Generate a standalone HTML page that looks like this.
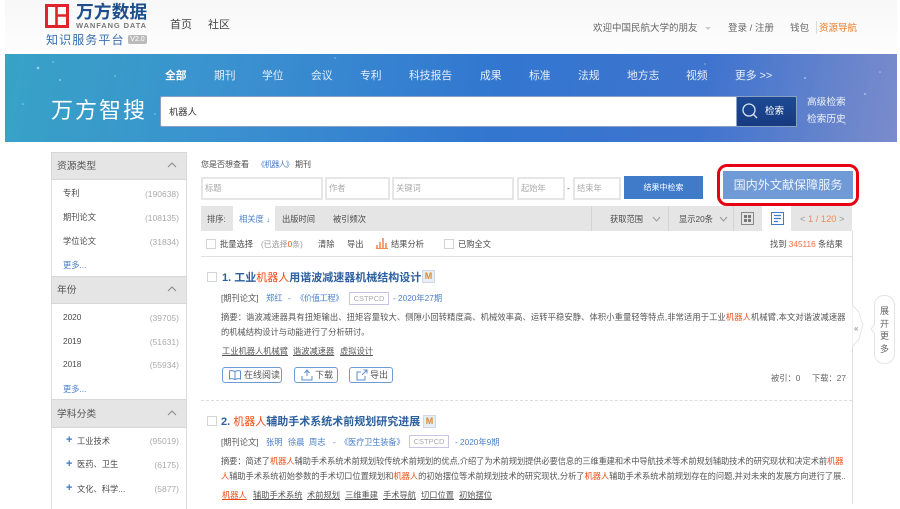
<!DOCTYPE html>
<html lang="zh"><head><meta charset="utf-8"><style>
html,body{margin:0;padding:0;background:#fff}
body{width:900px;height:509px;position:relative;overflow:hidden;font-family:"Liberation Sans","Noto Sans CJK SC",sans-serif;font-size:8.25px;color:#4a4a4a;filter:blur(.3px)}
.t{position:absolute;white-space:nowrap;line-height:12px;transform:translateY(1px)}
.b{position:absolute;box-sizing:border-box}
.w{color:#e6eefa;font-size:10.8px}
.n{color:#aaa;text-align:right;width:60px;font-size:8.5px}
.h{color:#555;font-size:9.8px}
.top{font-size:9.5px;color:#666}
.inp{position:absolute;box-sizing:border-box;border:2px solid #e6e6e6;height:23px;top:177px;background:#fff;color:#aaa;line-height:20px;padding-left:1px;font-size:8.25px}
.r{color:#f04a10}.bl{color:#4a7fc8}
.tag{color:#555;text-decoration:underline}
.btn{position:absolute;box-sizing:border-box;border:1px solid #6f9ad6;border-radius:3px;height:16px;top:367px;color:#555;line-height:15px;font-size:9px}
.title{color:#2b5f9e;font-size:11px;font-weight:bold}
.m{position:absolute;box-sizing:border-box;width:13px;height:13px;background:#e8eef6;border:1px solid #cfd8e4;font:bold 9px/11px "Liberation Sans",sans-serif;text-align:center;color:#d98a30}
.cb{position:absolute;box-sizing:border-box;width:10px;height:10px;border:1px solid #d4d4d4;background:#fff}
</style></head><body>
<div class="b" style="left:5px;top:0;width:892px;height:54px;background:linear-gradient(#f8f8f8,#fdfdfd)"></div>
<svg class="b" style="left:45px;top:4px" width="24" height="24" viewBox="0 0 24 24"><rect x="1.500" y="1.500" width="21" height="21" fill="none" stroke="#e0242c" stroke-width="3"/><path d="M11.500 1V23M11.500 11.500H23" fill="none" stroke="#e0242c" stroke-width="2.600"/></svg>
<span class="t" style="left:76px;top:1px;font-size:17.800px;line-height:20px;font-weight:bold;color:#1d4f8c">万方数据</span>
<span class="t" style="left:76px;top:20px;font-size:7.500px;line-height:10px;font-weight:bold;color:#777;letter-spacing:.9px">WANFANG DATA</span>
<span class="t" style="left:46px;top:32px;font-size:12px;line-height:15px;letter-spacing:1.100px;color:#3a6fb0">知识服务平台</span>
<span class="b" style="left:128px;top:35px;width:19px;height:9px;border-radius:2px;background:#bbb;color:#fff;font-size:7px;line-height:9px;text-align:center">V2.0</span>
<span class="t" style="left:170px;top:18px;font-size:11px;color:#444">首页</span>
<span class="t" style="left:208px;top:18px;font-size:11px;color:#444">社区</span>
<span class="t top" style="left:593px;top:22px">欢迎中国民航大学的朋友</span>
<svg class="b" style="left:705px;top:27px" width="6" height="3"><path d="M0 0H6L3 3Z" fill="#ccc"/></svg>
<span class="t top" style="left:728px;top:22px">登录 / 注册</span>
<span class="t top" style="left:790px;top:22px">钱包</span>
<div class="b" style="left:816px;top:21px;width:1px;height:13px;background:#ddd"></div>
<span class="t top" style="left:819px;top:22px;color:#f07a20">资源导航</span>

<div class="b" style="left:5px;top:54px;width:892px;height:88px;background:linear-gradient(100deg,#38a3c6 0%,#3a8fd0 28%,#3276d0 55%,#3f74ce 78%,#7b8ccb 100%)"></div>
<svg class="b" style="left:5px;top:54px" width="892" height="88"><g fill="#fff" opacity=".45"><circle cx="33" cy="14" r="1.400"/><circle cx="55" cy="26" r="1"/><circle cx="48" cy="8" r=".8"/><circle cx="110" cy="22" r=".8"/><circle cx="150" cy="60" r=".8"/><circle cx="18" cy="50" r=".8"/><circle cx="330" cy="4" r=".8"/><circle cx="700" cy="10" r=".8"/><circle cx="800" cy="24" r="1"/><circle cx="860" cy="40" r="1"/><circle cx="840" cy="70" r=".8"/><circle cx="875" cy="18" r=".8"/></g></svg>
<span class="t" style="left:165px;top:69px;color:#fff;font-size:10.800px;font-weight:bold">全部</span>
<span class="t w" style="left:214px;top:69px">期刊</span>
<span class="t w" style="left:262px;top:69px">学位</span>
<span class="t w" style="left:311px;top:69px">会议</span>
<span class="t w" style="left:360px;top:69px">专利</span>
<span class="t w" style="left:409px;top:69px">科技报告</span>
<span class="t w" style="left:480px;top:69px">成果</span>
<span class="t w" style="left:529px;top:69px">标准</span>
<span class="t w" style="left:578px;top:69px">法规</span>
<span class="t w" style="left:627px;top:69px">地方志</span>
<span class="t w" style="left:686px;top:69px">视频</span>
<span class="t w" style="left:735px;top:69px">更多 &gt;&gt;</span>
<span class="t" style="left:51px;top:95px;color:#fff;font-size:22px;line-height:30px;letter-spacing:2px">万方智搜</span>
<div class="b" style="left:160px;top:96px;width:577px;height:31px;background:#fff;border-radius:2px 0 0 2px;border:1px solid #8aa0c4;border-right:0"></div>
<span class="t" style="left:169px;top:105px;color:#333;font-size:9.300px">机器人</span>
<div class="b" style="left:736px;top:96px;width:61px;height:31px;background:linear-gradient(#1c4a94,#173a80);border:1px solid #8aa0c4"></div>
<svg class="b" style="left:741px;top:102px" width="18" height="18" viewBox="0 0 18 18"><circle cx="8" cy="8" r="6" fill="none" stroke="#d8e4f4" stroke-width="1.300"/><path d="M12.500 12.500L16 16" stroke="#d8e4f4" stroke-width="1.300"/></svg>
<span class="t" style="left:765px;top:105px;color:#fff;font-size:9.500px">检索</span>
<span class="t" style="left:807px;top:96px;color:#eef3fb;font-size:9.700px">高级检索</span>
<span class="t" style="left:807px;top:113px;color:#eef3fb;font-size:9.700px">检索历史</span>

<!-- sidebar -->
<div class="b" style="left:51px;top:152px;width:136px;height:357px;border:1px solid #ddd;border-bottom:0"></div>
<div class="b" style="left:51px;top:152px;width:136px;height:28px;background:#e5e5e5;border:1px solid #d8d8d8"></div>
<div class="b" style="left:51px;top:276px;width:136px;height:28px;background:#e5e5e5;border:1px solid #d8d8d8"></div>
<div class="b" style="left:51px;top:399px;width:136px;height:29px;background:#e5e5e5;border:1px solid #d8d8d8"></div>
<span class="t h" style="left:57px;top:160px">资源类型</span>
<span class="t h" style="left:57px;top:284px">年份</span>
<span class="t h" style="left:57px;top:408px">学科分类</span>
<svg class="b" style="left:167px;top:162px" width="10" height="6"><path d="M1 5L5 1L9 5" fill="none" stroke="#888"/></svg>
<svg class="b" style="left:167px;top:286px" width="10" height="6"><path d="M1 5L5 1L9 5" fill="none" stroke="#888"/></svg>
<svg class="b" style="left:167px;top:410px" width="10" height="6"><path d="M1 5L5 1L9 5" fill="none" stroke="#888"/></svg>
<span class="t" style="left:63px;top:187px">专利</span><span class="t n" style="left:119px;top:187px">(190638)</span>
<span class="t" style="left:63px;top:211px">期刊论文</span><span class="t n" style="left:119px;top:211px">(108135)</span>
<span class="t" style="left:63px;top:235px">学位论文</span><span class="t n" style="left:119px;top:235px">(31834)</span>
<span class="t bl" style="left:63px;top:259px">更多...</span>
<span class="t" style="left:63px;top:311px">2020</span><span class="t n" style="left:119px;top:311px">(39705)</span>
<span class="t" style="left:63px;top:335px">2019</span><span class="t n" style="left:119px;top:335px">(51631)</span>
<span class="t" style="left:63px;top:358px">2018</span><span class="t n" style="left:119px;top:358px">(55934)</span>
<span class="t bl" style="left:63px;top:383px">更多...</span>
<span class="t" style="left:66px;top:433px;color:#3f74c4;font-size:11px;font-weight:bold">+</span><span class="t" style="left:77px;top:435px">工业技术</span><span class="t n" style="left:119px;top:434px">(95019)</span>
<span class="t" style="left:66px;top:457px;color:#3f74c4;font-size:11px;font-weight:bold">+</span><span class="t" style="left:77px;top:458px">医药、卫生</span><span class="t n" style="left:119px;top:458px">(6175)</span>
<span class="t" style="left:66px;top:481px;color:#3f74c4;font-size:11px;font-weight:bold">+</span><span class="t" style="left:77px;top:483px">文化、科学...</span><span class="t n" style="left:119px;top:482px">(5877)</span>

<!-- filters -->
<span class="t" style="left:201px;top:158px;font-size:8px">您是否想查看</span>
<span class="t bl" style="left:257px;top:158px;font-size:8px;letter-spacing:-.8px">《机器人》</span>
<span class="t" style="left:295px;top:158px;font-size:8px">期刊</span>
<div class="inp" style="left:201px;width:122px;padding-left:2px">标题</div>
<div class="inp" style="left:325px;width:65px;padding-left:2px">作者</div>
<div class="inp" style="left:392px;width:122px;padding-left:2px">关键词</div>
<div class="inp" style="left:517px;width:48px;padding-left:2px">起始年</div>
<span class="t" style="left:567px;top:182px">-</span>
<div class="inp" style="left:573px;width:48px;padding-left:2px">结束年</div>
<div class="b" style="left:624px;top:176px;width:79px;height:23px;background:#3f7bc8;color:#fff;text-align:center;line-height:24px;font-size:8px">结果中检索</div>
<div class="b" style="left:717px;top:164px;width:142px;height:42px;border:3px solid #e60012;border-radius:10px"></div>
<div class="b" style="left:723px;top:171px;width:130px;height:28px;background:#6f9ad6;color:#eef4fc;text-align:center;line-height:29px;font-size:12.100px">国内外文献保障服务</div>

<!-- toolbar -->
<div class="b" style="left:201px;top:206px;width:651px;height:25px;background:#e5e5e5"></div>
<div class="b" style="left:233px;top:206px;width:42px;height:25px;background:#fff"></div>
<span class="t" style="left:207px;top:213px">排序:</span>
<span class="t bl" style="left:239px;top:213px">相关度 ↓</span>
<span class="t" style="left:282px;top:213px">出版时间</span>
<span class="t" style="left:333px;top:213px">被引频次</span>
<div class="b" style="left:591px;top:206px;width:1px;height:25px;background:#d4d4d4"></div>
<div class="b" style="left:668px;top:206px;width:1px;height:25px;background:#d4d4d4"></div>
<div class="b" style="left:733px;top:206px;width:1px;height:25px;background:#d4d4d4"></div>
<span class="t" style="left:610px;top:213px">获取范围</span>
<svg class="b" style="left:652px;top:216px" width="9" height="6"><path d="M1 1L4.500 5L8 1" fill="none" stroke="#999"/></svg>
<span class="t" style="left:679px;top:213px">显示20条</span>
<svg class="b" style="left:719px;top:216px" width="9" height="6"><path d="M1 1L4.500 5L8 1" fill="none" stroke="#999"/></svg>
<svg class="b" style="left:741px;top:212px" width="13" height="13"><rect x=".5" y=".5" width="12" height="12" fill="none" stroke="#888"/><rect x="3" y="3" width="3" height="3" fill="#777"/><rect x="7" y="3" width="3" height="3" fill="#777"/><rect x="3" y="7" width="3" height="3" fill="#777"/><rect x="7" y="7" width="3" height="3" fill="#777"/></svg>
<div class="b" style="left:762px;top:206px;width:29px;height:25px;background:#fff"></div>
<svg class="b" style="left:771px;top:212px" width="13" height="13"><rect x=".5" y=".5" width="12" height="12" fill="none" stroke="#3f7bc8"/><path d="M3 3.500H10M3 6.500H10M3 9.500H7" stroke="#3f7bc8" stroke-width="1.300"/></svg>
<span class="t" style="left:800px;top:212px;color:#999;font-size:9.300px">&lt; <span style="color:#f08a60">1 / 120</span> &gt;</span>

<div class="cb" style="left:206px;top:239px"></div>
<span class="t" style="left:220px;top:238px">批量选择</span>
<span class="t" style="left:261px;top:238px;color:#999;font-size:8px">(已选择<span class="r">0</span>条)</span>
<span class="t" style="left:318px;top:238px">清除</span>
<span class="t" style="left:347px;top:238px">导出</span>
<svg class="b" style="left:376px;top:237px" width="12" height="12"><path d="M1 11V8M4 11V5M7 11V1M10 11V6" stroke="#f08a50" stroke-width="1.600"/><path d="M0 11.500H12" stroke="#f08a50"/></svg>
<span class="t" style="left:391px;top:238px">结果分析</span>
<div class="cb" style="left:444px;top:239px"></div>
<span class="t" style="left:458px;top:238px">已购全文</span>
<span class="t" style="left:770px;top:238px">找到 <span style="color:#f07040">345116</span> 条结果</span>
<div class="b" style="left:201px;top:256px;width:651px;height:1px;background:#e0e0e0"></div>
<div class="b" style="left:852px;top:231px;width:1px;height:273px;background:#ddd"></div>

<!-- result 1 -->
<div class="cb" style="left:207px;top:272px"></div>
<span class="t title" style="left:222px;top:270px;line-height:14px">1. 工业<span class="r" style="font-weight:normal">机器人</span>用谐波减速器机械结构设计</span>
<div class="m" style="left:422px;top:270px">M</div>
<span class="t" style="left:221px;top:292px;color:#555">[期刊论文]</span>
<span class="t bl" style="left:266px;top:292px">郑红</span>
<span class="t bl" style="left:288px;top:292px">-</span>
<span class="t bl" style="left:296px;top:292px;letter-spacing:-.4px">《价值工程》</span>
<div class="b" style="left:349px;top:292px;width:40px;height:13px;border:1px solid #c8c4e4;color:#aaa;text-align:center;line-height:11px;font-size:7.500px">CSTPCD</div>
<span class="t bl" style="left:393px;top:292px">- 2020年27期</span>
<span class="t" style="left:221px;top:311px;color:#555;width:625px;overflow:hidden;letter-spacing:.125px">摘要：谐波减速器具有扭矩输出、扭矩容量较大、侧隙小回转精度高、机械效率高、运转平稳安静、体积小重量轻等特点,非常适用于工业<span class="r">机器人</span>机械臂,本文对谐波减速器</span>
<span class="t" style="left:221px;top:326px;color:#555">的机械结构设计与动能进行了分析研讨。</span>
<span class="t tag" style="left:222px;top:345px">工业机器人机械臂</span>
<span class="t tag" style="left:293px;top:345px">谐波减速器</span>
<span class="t tag" style="left:340px;top:345px">虚拟设计</span>
<div class="btn" style="left:222px;width:60px;padding-left:21px">在线阅读</div>
<svg class="b" style="left:229px;top:370px" width="12" height="10"><path d="M6 1.500C4 .5 2 .5 .5 1V9C2 8.500 4 8.500 6 9.500C8 8.500 10 8.500 11.500 9V1C10 .5 8 .5 6 1.500ZM6 1.500V9.500" fill="none" stroke="#5c8fd0"/></svg>
<div class="btn" style="left:294px;width:44px;padding-left:20px">下载</div>
<svg class="b" style="left:301px;top:369px" width="12" height="12"><path d="M6 1V7M3.500 4L6 1L8.500 4M1 7V11H11V7" fill="none" stroke="#5c8fd0"/></svg>
<div class="btn" style="left:349px;width:44px;padding-left:20px">导出</div>
<svg class="b" style="left:356px;top:369px" width="12" height="12"><path d="M9 7V11H1V3H5M6 6L11 1M7.500 1H11V4.500" fill="none" stroke="#5c8fd0"/></svg>
<span class="t" style="left:771px;top:372px;color:#666">被引：0</span>
<span class="t" style="left:812px;top:372px;color:#666">下载：27</span>
<div class="b" style="left:201px;top:400px;width:651px;border-top:1px dashed #ddd"></div>

<!-- result 2 -->
<div class="cb" style="left:207px;top:416px"></div>
<span class="t title" style="left:221px;top:414px;line-height:14px">2. <span class="r" style="font-weight:normal">机器人</span>辅助手术系统术前规划研究进展</span>
<div class="m" style="left:423px;top:415px">M</div>
<span class="t" style="left:221px;top:436px;color:#555">[期刊论文]</span>
<span class="t bl" style="left:266px;top:436px">张明</span>
<span class="t bl" style="left:288px;top:436px">徐晨</span>
<span class="t bl" style="left:309px;top:436px">周志</span>
<span class="t bl" style="left:333px;top:436px">-</span>
<span class="t bl" style="left:340px;top:436px;letter-spacing:-.2px">《医疗卫生装备》</span>
<div class="b" style="left:409px;top:435px;width:40px;height:13px;border:1px solid #c8c4e4;color:#aaa;text-align:center;line-height:11px;font-size:7.500px">CSTPCD</div>
<span class="t bl" style="left:455px;top:436px">- 2020年9期</span>
<span class="t" style="left:221px;top:455px;color:#555;width:625px;overflow:hidden;letter-spacing:-.09px">摘要：简述了<span class="r">机器人</span>辅助手术系统术前规划较传统术前规划的优点,介绍了为术前规划提供必要信息的三维重建和术中导航技术等术前规划辅助技术的研究现状和决定术前<span class="r">机器</span></span>
<span class="t" style="left:221px;top:470px;color:#555;width:625px;overflow:hidden;letter-spacing:-.04px"><span class="r">人</span>辅助手术系统初始参数的手术切口位置规划和<span class="r">机器人</span>的初始摆位等术前规划技术的研究现状,分析了<span class="r">机器人</span>辅助手术系统术前规划存在的问题,并对未来的发展方向进行了展...</span>
<span class="t tag r" style="left:222px;top:489px;color:#f04a10">机器人</span>
<span class="t tag" style="left:253px;top:489px">辅助手术系统</span>
<span class="t tag" style="left:307px;top:489px">术前规划</span>
<span class="t tag" style="left:345px;top:489px">三维重建</span>
<span class="t tag" style="left:383px;top:489px">手术导航</span>
<span class="t tag" style="left:421px;top:489px">切口位置</span>
<span class="t tag" style="left:459px;top:489px">初始摆位</span>

<!-- side flyout -->
<svg class="b" style="left:852px;top:305px" width="12" height="42"><path d="M0 0L7 7Q9 16 11 20Q9 26 7 34L0 42Z" fill="#fff" stroke="#e4e4e4"/></svg>
<span class="t" style="left:854px;top:322px;font-size:8px;color:#777">«</span>
<div class="b" style="left:874px;top:295px;width:21px;height:69px;border:1px solid #e4e4e4;border-radius:10px;background:#fff;color:#666;font-size:9px;line-height:12.500px;text-align:center;padding-top:9px">展<br>开<br>更<br>多</div>
<svg class="b" style="left:870px;top:324px" width="6" height="10"><path d="M5 0L1 5L5 10" fill="#fff" stroke="#e4e4e4"/></svg>
</body></html>
